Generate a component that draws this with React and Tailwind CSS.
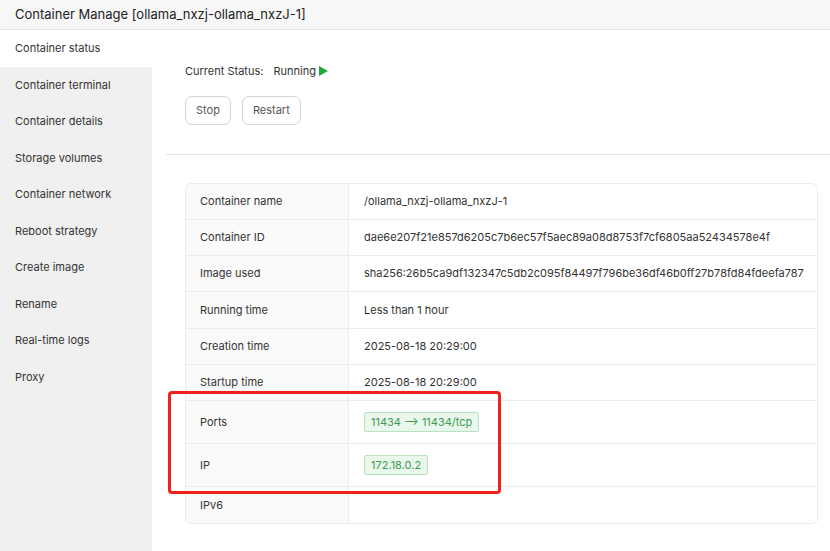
import React from "react";

const menu = [
  "Container status",
  "Container terminal",
  "Container details",
  "Storage volumes",
  "Container network",
  "Reboot strategy",
  "Create image",
  "Rename",
  "Real-time logs",
  "Proxy",
];

const rows = [
  ["Container name", "/ollama_nxzj-ollama_nxzJ-1"],
  ["Container ID", "dae6e207f21e857d6205c7b6ec57f5aec89a08d8753f7cf6805aa52434578e4f"],
  ["Image used", "sha256:26b5ca9df132347c5db2c095f84497f796be36df46b0ff27b78fd84fdeefa787"],
  ["Running time", "Less than 1 hour"],
  ["Creation time", "2025-08-18 20:29:00"],
  ["Startup time", "2025-08-18 20:29:00"],
];

const Badge = ({ children }) => (
  <span className="inline-block px-[6px] h-[20px] leading-[18px] border border-[#b7e4bf] bg-[#e9f7ec] text-[#3f9a52] rounded-[2px]">
    {children}
  </span>
);

export default function App() {
  return (
    <div
      className="w-[830px] h-[551px] overflow-hidden bg-white text-[11px] text-[#333]"
      style={{ fontFamily: "Inter, 'Liberation Sans', sans-serif" }}
    >
      <div className="h-[30px] bg-[#f7f7f7] border-b border-[#e5e5e5] flex items-center px-[15px] text-[13px] text-[#222]">
        Container Manage [ollama_nxzj-ollama_nxzJ-1]
      </div>
      <div className="flex h-[521px]">
        <div className="w-[152px] bg-[#f0f0f0] flex flex-col">
          {menu.map((m, i) => (
            <div
              key={m}
              className={`h-[36.5px] flex items-center px-[15px] ${i === 0 ? "bg-white" : ""}`}
            >
              {m}
            </div>
          ))}
        </div>
        <div className="flex-1 pl-[14px] relative">
          <div className="pl-[19px] pt-[33px] flex items-center gap-[10px]">
            <span>Current Status:</span>
            <span className="flex items-center gap-[3px]">
              Running
              <svg width="9" height="10" viewBox="0 0 9 10">
                <path d="M0 0 L9 5 L0 10 Z" fill="#22a83a" />
              </svg>
            </span>
          </div>
          <div className="pl-[19px] mt-[16px] flex gap-[11px]">
            <button className="h-[29px] px-[10px] border border-[#d4d4d4] rounded-[7px] text-[#555]">Stop</button>
            <button className="h-[29px] px-[10px] border border-[#d4d4d4] rounded-[7px] text-[#555]">Restart</button>
          </div>
          <div className="mt-[29px] border-t border-[#e3e3e3]" />
          <div className="ml-[19px] mr-[12px] mt-[28px] border border-[#ececec] rounded-[6px] overflow-hidden">
            {rows.map(([k, v]) => (
              <div key={k} className="flex h-[36.3px] border-b border-[#ececec]">
                <div className="w-[163px] bg-[#fafafa] border-r border-[#ececec] flex items-center pl-[14px]">{k}</div>
                <div className="flex-1 flex items-center pl-[15px] whitespace-nowrap">{v}</div>
              </div>
            ))}
            <div className="flex h-[43px] border-b border-[#ececec]">
              <div className="w-[163px] bg-[#fafafa] border-r border-[#ececec] flex items-center pl-[14px]">Ports</div>
              <div className="flex-1 flex items-center pl-[15px]"><Badge>11434 ⟶ 11434/tcp</Badge></div>
            </div>
            <div className="flex h-[43px] border-b border-[#ececec]">
              <div className="w-[163px] bg-[#fafafa] border-r border-[#ececec] flex items-center pl-[14px]">IP</div>
              <div className="flex-1 flex items-center pl-[15px]"><Badge>172.18.0.2</Badge></div>
            </div>
            <div className="flex h-[36px]">
              <div className="w-[163px] bg-[#fafafa] border-r border-[#ececec] flex items-center pl-[14px]">IPv6</div>
              <div className="flex-1" />
            </div>
          </div>
          <div className="absolute left-[16px] top-[361px] w-[333px] h-[103px] border-[3px] border-[#f0201c] rounded-[4px]" />
        </div>
      </div>
    </div>
  );
}
